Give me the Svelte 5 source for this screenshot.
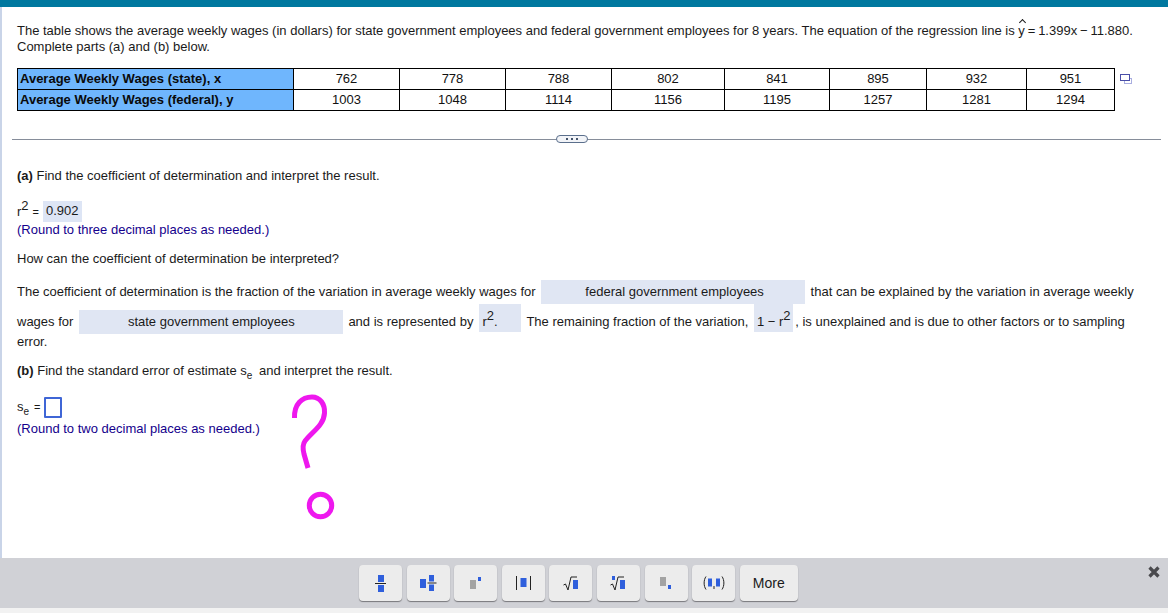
<script>
  const xs = [762, 778, 788, 802, 841, 895, 932, 951];
  const ys = [1003, 1048, 1114, 1156, 1195, 1257, 1281, 1294];
  const widths = [106, 106, 106, 113, 105, 97, 100, 88];
</script>

<div class="page">
  <div class="topbar"></div>

  <main class="content">
    <div class="intro">
      <p>The table shows the average weekly wages (in dollars) for state government employees and federal government employees for 8 years. The equation of the regression line is <span class="eqn"><span class="hat">y</span> = 1.399x − 11.880.</span></p>
      <p>Complete parts (a) and (b) below.</p>
    </div>

    <div class="table-row">
      <table>
        <colgroup>
          <col style="width: 276px" />
          {#each widths as w}
            <col style="width: {w}px" />
          {/each}
        </colgroup>
        <tbody>
          <tr>
            <th>Average Weekly Wages (state), x</th>
            {#each xs as v}<td>{v}</td>{/each}
          </tr>
          <tr>
            <th>Average Weekly Wages (federal), y</th>
            {#each ys as v}<td>{v}</td>{/each}
          </tr>
        </tbody>
      </table>
      <svg class="copy-icon" width="12" height="11" viewBox="0 0 12 11">
        <rect x="4.5" y="4.5" width="7" height="5" fill="#fff" stroke="#a9aee0" />
        <rect x="0.5" y="0.5" width="9" height="6" fill="#fff" stroke="#4a4fa8" />
      </svg>
    </div>

    <div class="divider">
      <span class="pill"><i></i><i></i><i></i></span>
    </div>

    <p class="part-a"><b>(a)</b> Find the coefficient of determination and interpret the result.</p>

    <div class="r-line">
      <span class="rsq">r<sup>2</sup></span>
      <span class="eq">=</span>
      <span class="answer">0.902</span>
    </div>
    <p class="hint">(Round to three decimal places as needed.)</p>

    <p class="question">How can the coefficient of determination be interpreted?</p>

    <div class="line line1">
      <span>The coefficient of determination is the fraction of the variation in average weekly wages for</span>
      <span class="blank wide">federal government employees</span>
      <span>that can be explained by the variation in average weekly</span>
    </div>
    <div class="line line2">
      <span class="txt">wages for</span>
      <span class="blank wide state">state government employees</span>
      <span class="txt">and is represented by</span>
      <span class="blank tall r-box">r<sup>2</sup>.</span>
      <span class="txt after-r">The remaining fraction of the variation,</span>
      <span class="blank tall one-box">1 − r<sup>2</sup></span>
      <span class="txt after-one">, is unexplained and is due to other factors or to sampling</span>
    </div>
    <p class="error-word">error.</p>

    <p class="part-b"><b>(b)</b> Find the standard error of estimate s<sub>e</sub> and interpret the result.</p>

    <div class="se-line">
      <span>s<sub>e</sub></span>
      <span class="eq">=</span>
      <span class="input"></span>
    </div>
    <p class="hint hint-b">(Round to two decimal places as needed.)</p>

    <svg class="scribble" width="50" height="130" viewBox="0 0 50 130" fill="none" stroke="#ee18ee" stroke-width="5">
      <path d="M4.5 26 C4 12 12 5 22 5 C30 5 35 12 34.5 21 C34 33 22 40 15 49 C12 53 13 58 14 62 L18 76" />
      <circle cx="30.5" cy="113.5" r="11.2" />
    </svg>
  </main>

  <footer class="toolbar">
    <button aria-label="fraction">
      <svg width="12" height="17" viewBox="0 0 12 17">
        <rect x="3" y="0" width="6" height="7" fill="#2f5fdc" /><rect x="0" y="8" width="11" height="1" fill="#222" /><rect x="3" y="10" width="6" height="7" fill="#2f5fdc" />
      </svg>
    </button>
    <button aria-label="mixed number">
      <svg width="17" height="16" viewBox="0 0 17 16">
        <rect x="0" y="4" width="6" height="9" fill="#2f5fdc" /><rect x="9" y="0" width="5" height="6.5" fill="#2f5fdc" /><rect x="7.5" y="7.5" width="9" height="1" fill="#222" /><rect x="9" y="9.5" width="5" height="6.5" fill="#2f5fdc" />
      </svg>
    </button>
    <button aria-label="exponent">
      <svg width="12" height="13" viewBox="0 0 12 13">
        <rect x="0" y="3" width="6" height="9" fill="#a3a3a3" /><rect x="8" y="0" width="3" height="4" fill="#2f5fdc" />
      </svg>
    </button>
    <button aria-label="absolute value">
      <svg width="15" height="14" viewBox="0 0 15 14">
        <rect x="0" y="0" width="1" height="14" fill="#222" /><rect x="4.5" y="2" width="6" height="9" fill="#2f5fdc" /><rect x="14" y="0" width="1" height="14" fill="#222" />
      </svg>
    </button>
    <button aria-label="square root">
      <svg width="16" height="15" viewBox="0 0 16 15">
        <path d="M0.5 9 L2.5 8 L5 14 L8 1 H14" fill="none" stroke="#222" stroke-width="1" /><rect x="10" y="4" width="5" height="9" fill="#2f5fdc" />
      </svg>
    </button>
    <button aria-label="nth root">
      <svg width="16" height="15" viewBox="0 0 16 15">
        <rect x="2" y="0" width="3" height="4" fill="#2f5fdc" /><path d="M0.5 9 L2.5 8 L5 14 L8 1 H14" fill="none" stroke="#222" stroke-width="1" /><rect x="10" y="4" width="5" height="9" fill="#2f5fdc" />
      </svg>
    </button>
    <button aria-label="subscript">
      <svg width="12" height="13" viewBox="0 0 12 13">
        <rect x="0" y="0" width="6" height="9" fill="#a3a3a3" /><rect x="8" y="8" width="3" height="4" fill="#2f5fdc" />
      </svg>
    </button>
    <button aria-label="ordered pair">
      <svg width="22" height="14" viewBox="0 0 22 14">
        <path d="M3 0.5 C0.5 4 0.5 10 3 13.5 M19 0.5 C21.5 4 21.5 10 19 13.5" fill="none" stroke="#222" stroke-width="1" /><rect x="5" y="2.5" width="4" height="8" fill="#2f5fdc" /><rect x="13" y="2.5" width="4" height="8" fill="#2f5fdc" /><rect x="10.5" y="10" width="1" height="3" fill="#222" />
      </svg>
    </button>
    <button class="more">More</button>
    <svg class="close" width="12" height="12" viewBox="0 0 12 12">
      <path d="M1.5 1.5 L10.5 10.5 M10.5 1.5 L1.5 10.5" stroke="#4a4a4e" stroke-width="3.2" />
    </svg>
  </footer>
</div>

<style>
  :global(body) {
    margin: 0;
    background: #fff;
  }

  .page {
    height: 613px;
    display: flex;
    flex-direction: column;
    position: relative;
    font-family: "Liberation Sans", Arial, sans-serif;
    font-size: 13px;
    line-height: 16px;
    color: #1a1a1a;
    overflow: hidden;
  }

  p {
    margin: 0;
  }

  .topbar {
    height: 7px;
    background: #00789f;
    flex: none;
  }

  .content {
    flex: 1;
    position: relative;
    border-left: 2px solid #c9d4e8;
    padding: 16px 0 0 15px;
    min-height: 0;
  }

  .eqn {
    word-spacing: -0.75px;
  }

  .hat {
    position: relative;
    display: inline-block;
  }

  .hat::before {
    content: "";
    position: absolute;
    left: 1.5px;
    top: -3px;
    width: 4px;
    height: 4px;
    border-left: 1px solid #1a1a1a;
    border-top: 1px solid #1a1a1a;
    transform: rotate(45deg);
  }

  .table-row {
    display: flex;
    align-items: flex-start;
    margin-top: 13px;
  }

  table {
    border-collapse: collapse;
    table-layout: fixed;
    width: 1097px;
    color: #111;
  }

  th, td {
    border: 1px solid #000;
    height: 20px;
    padding: 0;
    font-size: 13px;
    line-height: 20px;
    text-align: center;
  }

  th {
    background: #6fb6fd;
    text-align: left;
    padding-left: 2px;
    font-weight: bold;
    color: #0a0a0a;
  }

  .copy-icon {
    margin: 6px 0 0 5px;
  }

  .divider {
    position: relative;
    height: 1px;
    background: #868d9a;
    margin: 28px 7px 0 -5px;
  }

  .pill {
    position: absolute;
    left: 544px;
    top: -4px;
    width: 32px;
    height: 8px;
    box-sizing: border-box;
    border: 1px solid #5b6f8c;
    border-radius: 5px;
    background: #f2f4f8;
    display: flex;
    align-items: center;
    justify-content: center;
    gap: 3px;
  }

  .pill i {
    width: 2px;
    height: 2px;
    background: #44546c;
  }

  .part-a {
    margin-top: 28px;
  }

  .r-line {
    display: flex;
    align-items: center;
    height: 21px;
    margin-top: 17px;
  }

  sup {
    font-size: 13px;
    line-height: 0;
    vertical-align: 6px;
  }

  .eq {
    margin: 0 4px;
    font-size: 11px;
  }

  .answer {
    background: #dde5f5;
    padding: 0 3px;
    height: 21px;
    line-height: 20px;
  }

  .hint {
    color: #14008c;
  }

  .question {
    margin-top: 13px;
  }

  .line {
    display: flex;
    white-space: nowrap;
  }

  .line1 {
    align-items: center;
    margin-top: 13px;
    height: 24px;
    gap: 5px;
  }

  .line2 {
    align-items: flex-start;
    height: 28px;
  }

  .txt {
    padding-top: 10px;
  }

  .blank {
    background: #e0e6f3;
    text-align: center;
    height: 24px;
    line-height: 24px;
    color: #1a1a1a;
    display: inline-block;
  }

  .wide {
    width: 264px;
    box-sizing: border-box;
  }

  .line1 .wide {
    margin-right: 1px;
    padding-left: 4px;
  }

  .state {
    margin: 6px 5px 0 6px;
  }

  .tall {
    height: 28px;
    line-height: 36px;
  }

  .r-box {
    width: 39px;
    padding-left: 3px;
    margin-left: 6px;
    text-align: left;
  }

  .after-r {
    margin-left: 5px;
  }

  .one-box {
    width: 39px;
    margin-left: 6px;
  }

  .after-one {
    margin-left: 2px;
  }

  .error-word {
    margin-top: 2px;
  }

  .part-b {
    margin-top: 13px;
  }

  sub {
    font-size: 10px;
    line-height: 0;
    vertical-align: -4px;
  }

  .part-b sub {
    margin-right: 3px;
  }

  .se-line {
    display: flex;
    align-items: center;
    margin-top: 16px;
    height: 24px;
  }

  .se-line .eq {
    margin: 0 3px 0 5px;
  }

  .input {
    width: 14px;
    height: 17px;
    border: 2px solid #3f66d6;
    border-radius: 1px;
    background: #fff;
  }

  .hint-b {
    margin-top: 2px;
  }

  .scribble {
    position: absolute;
    left: 288px;
    top: 385px;
  }

  .toolbar {
    flex: none;
    height: 50px;
    margin-bottom: 5px;
    background: #d0d1d6;
    display: flex;
    align-items: flex-start;
    gap: 4.6px;
    padding: 7px 0 0 359px;
    box-sizing: border-box;
    position: relative;
  }

  .page::after {
    content: "";
    position: absolute;
    left: 0;
    right: 0;
    top: 608px;
    height: 5px;
    background: #f2f2f2;
  }

  button {
    width: 43px;
    height: 36px;
    padding: 0;
    border: none;
    border-radius: 4px;
    background: #ececec;
    box-shadow: 0 1px 1px #77777c;
    display: flex;
    align-items: center;
    justify-content: center;
  }

  .more {
    width: 58px;
    font-family: "Liberation Sans", Arial, sans-serif;
    font-size: 14px;
    color: #1a1a1a;
  }

  .close {
    position: absolute;
    left: 1148px;
    top: 8px;
  }
</style>
